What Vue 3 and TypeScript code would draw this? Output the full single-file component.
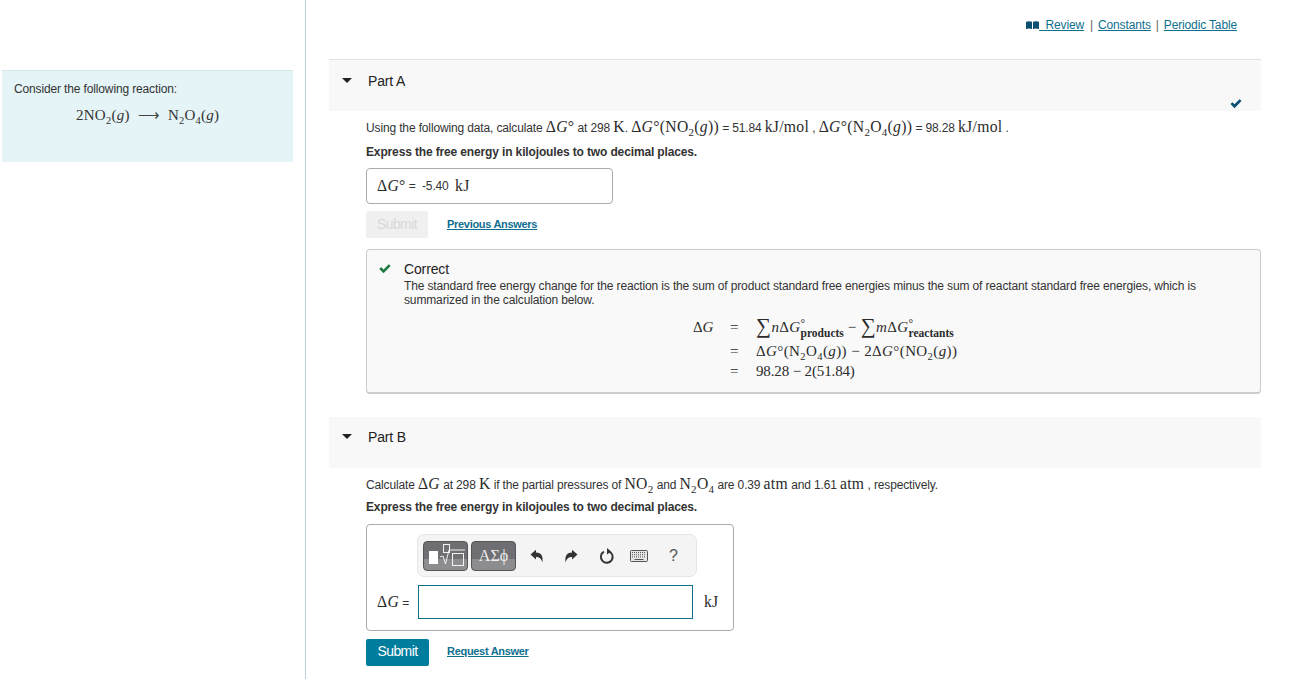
<script setup lang="ts">
const keyRows = [0, 1, 2]
</script>

<template>
  <div class="page">
    <aside class="sidebar">
      <div class="intro">
        <p class="intro-text">Consider the following reaction:</p>
        <p class="reaction m">2NO<sub>2</sub>(<i>g</i>)<span class="arrow">⟶</span>N<sub>2</sub>O<sub>4</sub>(<i>g</i>)</p>
      </div>
    </aside>

    <main class="main">
      <nav class="links">
        <svg class="book" viewBox="0 0 13 8" width="13" height="8">
          <path d="M0 .8C2 0 4 0 6 .8V8C4 7.2 2 7.2 0 8zM7 .8C9 0 11 0 13 .8V8C11 7.2 9 7.2 7 8z" fill="#0d4f73" />
        </svg>
        <a class="link">&nbsp;&nbsp;Review</a><span class="sep">|</span><a class="link">Constants</a><span class="sep">|</span><a class="link">Periodic Table</a>
      </nav>

      <section class="part part-a">
        <header class="part-head first">
          <span class="caret"></span>
          <h2>Part A</h2>
          <svg class="done" viewBox="0 0 12 10" width="12" height="10">
            <path d="M0.5 5 2.4 3.2 4.5 5.3 9.6 0.3 11.5 2.1 4.5 9.2z" fill="#0d4f73" />
          </svg>
        </header>
        <div class="part-body">
          <p class="line q-a">
            Using the following data, calculate <span class="m mb">Δ<i>G</i><sup>°</sup></span> at 298 <span class="m mb">K</span>.
            <span class="m mb">Δ<i>G</i><sup>°</sup>(NO<sub>2</sub>(<i>g</i>))</span> = 51.84 <span class="m mb">kJ/mol</span> ,
            <span class="m mb">Δ<i>G</i><sup>°</sup>(N<sub>2</sub>O<sub>4</sub>(<i>g</i>))</span> = 98.28 <span class="m mb">kJ/mol</span> .
          </p>
          <p class="line strong">Express the free energy in kilojoules to two decimal places.</p>
          <div class="answer">
            <span class="m mb">Δ<i>G</i><sup>°</sup></span>&nbsp;=&nbsp; -5.40 &nbsp;<span class="m mb">kJ</span>
          </div>
          <div class="actions">
            <button class="submit off" type="button">Submit</button>
            <a class="action-link">Previous Answers</a>
          </div>
          <div class="feedback">
            <div class="feedback-head">
              <svg class="ok" viewBox="0 0 12 10" width="12" height="10">
                <path d="M0.3 5 2.2 3.1 4.5 5.4 9.8 0.2 11.7 2.1 4.5 9.3z" fill="#1f7a3f" />
              </svg>
              <div>
                <div class="ok-title">Correct</div>
                <p class="ok-text">The standard free energy change for the reaction is the sum of product standard free energies minus the sum of reactant standard free energies, which is summarized in the calculation below.</p>
              </div>
            </div>
            <div class="calc m">
              <span class="lhs">Δ<i>G</i></span>
              <span class="eq">=</span>
              <span class="rhs wide">
                <span class="sum">∑</span><i>n</i>Δ<i>G</i><span class="scripts"><span>°</span><span>products</span></span><span class="minus">−</span><span class="sum">∑</span><i>m</i>Δ<i>G</i><span class="scripts"><span>°</span><span>reactants</span></span>
              </span>
              <span></span>
              <span class="eq">=</span>
              <span class="rhs wide">Δ<i>G</i><sup>°</sup>(N<sub>2</sub>O<sub>4</sub>(<i>g</i>)) − 2Δ<i>G</i><sup>°</sup>(NO<sub>2</sub>(<i>g</i>))</span>
              <span></span>
              <span class="eq">=</span>
              <span class="rhs">98.28 − 2(51.84)</span>
            </div>
          </div>
        </div>
      </section>

      <section class="part part-b">
        <header class="part-head">
          <span class="caret"></span>
          <h2>Part B</h2>
        </header>
        <div class="part-body">
          <p class="line q-b">
            Calculate <span class="m mb">Δ<i>G</i></span> at 298 <span class="m mb">K</span> if the partial pressures of
            <span class="m mb">NO<sub>2</sub></span> and <span class="m mb">N<sub>2</sub>O<sub>4</sub></span> are 0.39 <span class="m mb">atm</span>
            and 1.61 <span class="m mb">atm</span> , respectively.
          </p>
          <p class="line strong">Express the free energy in kilojoules to two decimal places.</p>
          <div class="editor">
            <div class="toolbar">
              <button class="tool-btn templates" type="button" aria-label="Templates">
                <span class="block"></span>
                <svg viewBox="0 0 28 24" width="28" height="24">
                  <rect x="4.5" y="1.5" width="6" height="8" fill="none" stroke="#f2f2f2" />
                  <path d="M1 14 4 13 6.5 21 10 7H26" fill="none" stroke="#f2f2f2" />
                  <rect x="13.5" y="10.5" width="11" height="12" fill="none" stroke="#f2f2f2" />
                </svg>
              </button>
              <button class="tool-btn symbols" type="button">ΑΣϕ</button>
              <svg class="tool-icon undo" viewBox="0 0 14 14" width="14" height="14">
                <path d="M0.5 5.5 6 0.8V3.6C10.5 3.6 13.5 6.5 12.4 13.4 11.2 9.6 9.5 8 6 8V10.6z" fill="#333" />
              </svg>
              <svg class="tool-icon redo" viewBox="0 0 14 14" width="14" height="14">
                <path d="M13.5 5.5 8 0.8V3.6C3.5 3.6 0.5 6.5 1.6 13.4 2.8 9.6 4.5 8 8 8V10.6z" fill="#333" />
              </svg>
              <svg class="tool-icon redo-circle" viewBox="0 0 16 16" width="16" height="16">
                <path d="M9.8 3.3A5.9 5.9 0 1 1 4.9 3.7" fill="none" stroke="#333" stroke-width="1.9" />
                <path d="M8 0 12.2 3.4 8 6.4z" fill="#333" />
              </svg>
              <svg class="tool-icon keys" viewBox="0 0 18 12" width="18" height="12">
                <rect x="0.5" y="0.5" width="17" height="11" rx="1" fill="#e6e6e6" stroke="#555" />
                <g v-for="row in keyRows" :key="row">
                  <path :d="`M2 ${2.5 + row * 2.2}H16`" stroke="#555" stroke-dasharray="1 1" />
                </g>
                <path d="M4.5 9.5H13.5" stroke="#555" />
              </svg>
              <span class="help">?</span>
            </div>
            <div class="entry-row">
              <span class="entry-label"><span class="m mb">Δ<i>G</i></span> =</span>
              <input class="entry" type="text" />
              <span class="m mb entry-unit">kJ</span>
            </div>
          </div>
          <div class="actions second">
            <button class="submit" type="button">Submit</button>
            <a class="action-link">Request Answer</a>
          </div>
        </div>
      </section>
    </main>
  </div>
</template>

<style>
html,
body {
  margin: 0;
  background: #fff;
}
</style>

<style scoped>
.page {
  display: flex;
  height: 679px;
  overflow: hidden;
  font-family: 'Liberation Sans', Arial, sans-serif;
  font-size: 12px;
  letter-spacing: -0.14px;
  color: #333;
}

p,
h2 {
  margin: 0;
}

.sidebar {
  flex: none;
  box-sizing: border-box;
  width: 306px;
  padding: 70px 12px 0 2px;
  border-right: 1px solid #b5d3e5;
}

.intro {
  height: 92px;
  box-sizing: border-box;
  padding: 11px 12px 0;
  background: #e5f4f6;
  border-top: 1px solid #d3e5e5;
}

.intro-text {
  line-height: 14px;
}

.reaction {
  margin-top: 10px;
  padding-left: 62px;
  font-size: 15px;
  line-height: 18px;
  letter-spacing: 0.25px;
  color: #333;
  white-space: nowrap;
}

.arrow {
  display: inline-block;
  margin: 0 8px;
  color: #444;
}

.m {
  font-family: 'Liberation Serif', 'Times New Roman', serif;
}

.mb {
  font-size: 15.7px;
  letter-spacing: 0.28px;
  color: #2b2b2b;
}

sub {
  font-size: 0.7em;
  line-height: 0;
}

sup {
  font-size: 1em;
  line-height: 0;
  vertical-align: baseline;
}

.main {
  flex: none;
  box-sizing: border-box;
  width: 955px;
  padding-left: 23px;
}

.links {
  display: flex;
  justify-content: flex-end;
  align-items: center;
  height: 59px;
  box-sizing: border-box;
  padding: 0 24px 10px 0;
  line-height: 14px;
}

.link {
  color: #0f6f8f;
  text-decoration: underline;
  white-space: pre;
}

.sep {
  margin: 0 5px;
  color: #666;
}

.link:first-of-type + .sep {
  margin-left: 6px;
}

.part-head {
  position: relative;
  display: flex;
  align-items: flex-start;
  height: 51px;
  box-sizing: border-box;
  padding: 13px 0 0 13px;
  background: #f8f8f8;
}

.part-head.first {
  height: 52px;
  border-top: 1px solid #e2e2e2;
}

.part-b {
  margin-top: 23px;
}

.part-b .part-head {
  padding-top: 12px;
}

.caret {
  width: 0;
  height: 0;
  margin: 5px 16px 0 0;
  border-left: 5px solid transparent;
  border-right: 5px solid transparent;
  border-top: 5px solid #222;
}

.part-head h2 {
  font-size: 14px;
  font-weight: 400;
  line-height: 16px;
  color: #222;
}

.done {
  position: absolute;
  top: 39px;
  right: 19px;
}

.part-body {
  padding-left: 37px;
}

.line {
  height: 18px;
  line-height: 18px;
  white-space: nowrap;
}

.q-a {
  margin-top: 7px;
}

.q-b {
  margin-top: 7px;
}

.strong {
  margin-top: 7px;
  font-weight: 700;
  color: #333;
}

.q-b + .strong {
  margin-top: 5px;
}

.answer {
  display: flex;
  align-items: center;
  box-sizing: border-box;
  width: 247px;
  height: 36px;
  margin-top: 7px;
  padding-left: 10px;
  border: 1px solid #aaa;
  border-radius: 4px;
  white-space: pre;
}

.actions {
  display: flex;
  align-items: center;
  gap: 19px;
  margin-top: 7px;
}

.actions.second {
  gap: 18px;
  margin-top: 8px;
}

.submit {
  width: 63px;
  height: 27px;
  padding: 0 0 4px;
  border: 0;
  border-radius: 2px;
  background: #007c9c;
  color: #fff;
  font: 14px 'Liberation Sans', Arial, sans-serif;
  letter-spacing: -0.6px;
}

.submit.off {
  width: 62px;
  padding-bottom: 2px;
  background: #f0f0f0;
  color: #d8d8d8;
}

.action-link {
  margin-bottom: 2px;
  font-weight: 700;
  font-size: 11px;
  letter-spacing: -0.3px;
  color: #0f6f8f;
  text-decoration: underline;
}

.second .action-link {
  margin-bottom: 3px;
}

.feedback {
  box-sizing: border-box;
  height: 145px;
  margin-top: 11px;
  padding: 12px 12px 0;
  background: #f9f9f9;
  border: 1px solid #ccc;
  border-bottom-width: 2px;
  border-radius: 4px;
}

.feedback-head {
  display: flex;
  gap: 13px;
}

.ok {
  flex: none;
  margin-top: 2px;
}

.ok-title {
  font-size: 14px;
  line-height: 14px;
  color: #222;
}

.ok-text {
  width: 825px;
  margin-top: 3px;
  line-height: 14px;
}

.calc {
  display: grid;
  grid-template-columns: 37px 26px auto;
  grid-template-rows: 24px 20px 22px;
  margin: 9px 0 0 314px;
  font-size: 15px;
  line-height: 22px;
  color: #2b2b2b;
  white-space: nowrap;
}

.wide {
  letter-spacing: 0.4px;
}

.sum {
  font-size: 21px;
  line-height: 0;
  vertical-align: -1px;
}

.minus {
  margin: 0 4px;
}

.scripts {
  display: inline-flex;
  flex-direction: column;
  height: 0;
  vertical-align: 5px;
  font-size: 11.5px;
  font-weight: 700;
  line-height: 10px;
  letter-spacing: 0;
}

.scripts span:first-child {
  font-weight: 400;
}

.editor {
  box-sizing: border-box;
  width: 368px;
  height: 107px;
  margin-top: 8px;
  border: 1px solid #aaa;
  border-radius: 4px;
}

.toolbar {
  display: flex;
  align-items: center;
  box-sizing: border-box;
  width: 280px;
  height: 43px;
  margin: 9px 0 0 50px;
  padding-left: 5px;
  background: #f4f4f4;
  border: 1px solid #e6e6e6;
  border-radius: 7px;
}

.tool-btn {
  box-sizing: border-box;
  height: 30px;
  padding: 0;
  border: 1px solid #555;
  border-radius: 4px;
  background: linear-gradient(#6f6f73 0 62%, #8d8d90 62%);
  color: #f0f0f0;
}

.templates {
  display: flex;
  align-items: center;
  width: 45px;
  margin-right: 3px;
  padding-left: 5px;
}

.templates svg {
  margin-left: 1px;
  margin-top: -1px;
}

.block {
  width: 9px;
  height: 13px;
  margin-top: 4px;
  background: #fff;
}

.symbols {
  width: 45px;
  font: 16px 'Liberation Serif', serif;
}

.tool-icon {
  flex: none;
}

.undo {
  margin-left: 14px;
}

.redo {
  margin-left: 20px;
}

.redo-circle {
  margin-left: 21px;
}

.keys {
  margin-left: 15px;
}

.help {
  margin-left: 21px;
  font-size: 16px;
  color: #555;
}

.entry-row {
  display: grid;
  grid-template-columns: 41px 275px auto;
  align-items: center;
  margin-top: 8px;
  padding-left: 10px;
}

.entry-label {
  white-space: nowrap;
}

.entry {
  box-sizing: border-box;
  width: 275px;
  height: 34px;
  border: 1px solid #0f6f8f;
  outline: none;
  background: #fff;
}

.entry-unit {
  margin-left: 11px;
}
</style>
